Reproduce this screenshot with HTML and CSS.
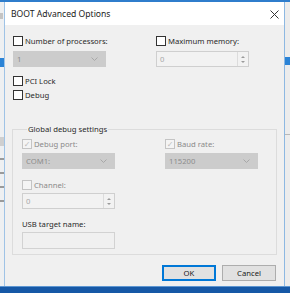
FILE: index.html
```html
<!DOCTYPE html>
<html lang="en">
<head>
    <meta charset="UTF-8">
    <title>BOOT Advanced Options</title>
    <link rel="stylesheet" href="styles.css">
</head>
<body>
    <div class="screen">
        <div class="top-strip"></div>
        <div class="middle">
            <div class="side side-left">
                <span class="frag frag-text"></span>
                <span class="frag frag-sel"></span>
                <span class="frag frag-box"></span>
                <span class="frag frag-dark"></span>
            </div>

            <div class="dialog">
                <div class="titlebar">
                    <span class="title">BOOT Advanced Options</span>
                    <svg class="close" width="9" height="9" viewBox="0 0 9 9">
                        <path d="M0.5 0.5 L8.5 8.5 M8.5 0.5 L0.5 8.5" stroke="#333" stroke-width="1" fill="none"/>
                    </svg>
                </div>

                <div class="body">
                    <div class="pair top-pair">
                        <div class="field">
                            <div class="check"><span class="box"></span>Number of processors:</div>
                            <div class="combo"><span>1</span>
                                <svg width="7" height="4" viewBox="0 0 7 4"><path d="M0.5 0.5 L3.5 3.5 L6.5 0.5" stroke="#a8a8a8" fill="none"/></svg>
                            </div>
                        </div>
                        <div class="field">
                            <div class="check"><span class="box"></span>Maximum memory:</div>
                            <div class="spin"><span>0</span>
                                <div class="spin-btns">
                                    <span class="arrow up"></span>
                                    <span class="arrow down"></span>
                                </div>
                            </div>
                        </div>
                    </div>

                    <div class="check pci"><span class="box"></span>PCI Lock</div>
                    <div class="check debug"><span class="box"></span>Debug</div>

                    <fieldset class="group">
                        <legend>Global debug settings</legend>
                        <div class="pair">
                            <div class="field">
                                <div class="check off"><span class="box checked">&#10003;</span>Debug port:</div>
                                <div class="combo"><span>COM1:</span>
                                    <svg width="7" height="4" viewBox="0 0 7 4"><path d="M0.5 0.5 L3.5 3.5 L6.5 0.5" stroke="#a8a8a8" fill="none"/></svg>
                                </div>
                            </div>
                            <div class="field">
                                <div class="check off"><span class="box checked">&#10003;</span>Baud rate:</div>
                                <div class="combo"><span>115200</span>
                                    <svg width="7" height="4" viewBox="0 0 7 4"><path d="M0.5 0.5 L3.5 3.5 L6.5 0.5" stroke="#a8a8a8" fill="none"/></svg>
                                </div>
                            </div>
                        </div>

                        <div class="field channel">
                            <div class="check off"><span class="box"></span>Channel:</div>
                            <div class="spin"><span>0</span>
                                <div class="spin-btns">
                                    <span class="arrow up"></span>
                                    <span class="arrow down"></span>
                                </div>
                            </div>
                        </div>

                        <div class="field usb">
                            <div class="label">USB target name:</div>
                            <div class="textbox"></div>
                        </div>
                    </fieldset>

                    <div class="buttons">
                        <button class="btn btn-default">OK</button>
                        <button class="btn">Cancel</button>
                    </div>
                </div>
            </div>

            <div class="side side-right">
                <span class="frag frag-sel"></span>
                <span class="frag frag-line"></span>
            </div>
        </div>
        <div class="taskbar"></div>
    </div>
</body>
</html>
```

FILE: styles.css
```css
html, body {
    margin: 0;
    padding: 0;
}
body {
    font-family: "Noto Sans", "DejaVu Sans", sans-serif;
    font-size: 7.7px;
    color: #2a2a2a;
    background: #f0f0f0;
}
.screen {
    width: 290px;
    height: 293px;
    display: flex;
    flex-direction: column;
    overflow: hidden;
}
.top-strip {
    height: 2px;
    background: #2f7dcc;
}
.middle {
    flex: 1;
    display: flex;
}
.taskbar {
    height: 6px;
    background: #1658a6;
    border-top: 1px solid #5d96d2;
}

/* background windows peeking out at the sides */
.side {
    position: relative;
    width: 5px;
    background: #eef0f2;
}
.side-left {
    border-right: 1px solid #9fc3e6;
    width: 4px;
}
.frag {
    position: absolute;
    left: 0;
    right: 0;
}
.frag-text {
    top: 11px;
    height: 6px;
    right: 1px;
    background: #c4c4c4;
}
.frag-sel {
    top: 56px;
    height: 9px;
    background: #2b83d6;
}
.frag-box {
    top: 135px;
    height: 9px;
    background: #cfcfcf;
}
.frag-dark {
    top: 150px;
    height: 60px;
    background: repeating-linear-gradient(#eef0f2 0 6px, #9a9a9a 6px 8px, #eef0f2 8px 14px);
}
.side-right {
    border-left: 1px solid #8db8e2;
    background: #ececec;
}
.side-right .frag-sel {
    top: 55px;
    height: 8px;
}
.frag-line {
    top: 132px;
    height: 1px;
    background: #b8b8b8;
}

/* dialog */
.dialog {
    flex: 1;
    display: flex;
    flex-direction: column;
    background: #f0f0f0;
}
.titlebar {
    height: 23px;
    background: #fff;
    display: flex;
    align-items: center;
    justify-content: space-between;
    padding: 0 5px 0 6px;
}
.title {
    font-size: 8.6px;
    color: #1a1a1a;
}
.close {
    margin-top: 1px;
}
.body {
    padding: 11px 7px 0 7px;
}
.pair {
    display: flex;
    gap: 50px;
}
.top-pair {
    padding-left: 1px;
}
.field {
    width: 93px;
}
.check {
    height: 10px;
    display: flex;
    align-items: center;
    gap: 2px;
    line-height: 10px;
    white-space: nowrap;
}
.box {
    width: 8px;
    height: 8px;
    border: 1px solid #333;
    background: #fff;
    flex: none;
    font-size: 8px;
    line-height: 8px;
    text-align: center;
    color: #bcbcbc;
}
.check.off {
    color: #8a8a8a;
}
.check.off .box {
    border-color: #c4c4c4;
    background: #f4f4f4;
}
.pci {
    margin: 9px 0 0 1px;
}
.debug {
    margin: 4px 0 0 1px;
}
.combo, .spin, .textbox {
    height: 16px;
    box-sizing: border-box;
    margin-top: 5px;
}
.combo {
    background: #cccccc;
    border: 1px solid #cccccc;
    display: flex;
    align-items: center;
    justify-content: space-between;
    padding: 0 7px 0 3px;
    color: #8c8c8c;
}
.spin {
    background: #f2f2f2;
    border: 1px solid #cfcfcf;
    display: flex;
    align-items: center;
    justify-content: space-between;
    padding-left: 3px;
    color: #a8a8a8;
}
.spin-btns {
    width: 10px;
    height: 14px;
    border-left: 1px solid #dcdcdc;
    display: flex;
    flex-direction: column;
    align-items: center;
    justify-content: center;
    gap: 3px;
}
.arrow {
    width: 0;
    height: 0;
    border-left: 2px solid transparent;
    border-right: 2px solid transparent;
}
.arrow.up {
    border-bottom: 2px solid #9a9a9a;
}
.arrow.down {
    border-top: 2px solid #9a9a9a;
}

/* group box */
.group {
    margin: 24px 0 0 0;
    padding: 5px 9px 5px 9px;
    border: 1px solid #dcdcdc;
    min-width: 0;
}
.group legend {
    padding: 0 1px;
    margin-left: 5px;
    line-height: 10px;
    color: #2a2a2a;
}
.group .combo {
    margin-top: 4px;
}
.channel {
    margin-top: 11px;
}
.channel .spin {
    margin-top: 3px;
}
.usb {
    margin-top: 10px;
}
.label {
    line-height: 10px;
    color: #2a2a2a;
}
.textbox {
    height: 17px;
    margin-top: 3px;
    background: #f0f0f0;
    border: 1px solid #d2d2d2;
}

/* buttons */
.buttons {
    display: flex;
    justify-content: flex-end;
    gap: 6px;
    margin-top: 10px;
    padding-right: 1px;
}
.btn {
    width: 54px;
    height: 16px;
    padding: 0;
    font-family: inherit;
    font-size: 7.7px;
    color: #1a1a1a;
    background: #e1e1e1;
    border: 1px solid #adadad;
}
.btn-default {
    border: 1px solid #0078d7;
    box-shadow: inset 0 0 0 1px #0078d7;
}
```
